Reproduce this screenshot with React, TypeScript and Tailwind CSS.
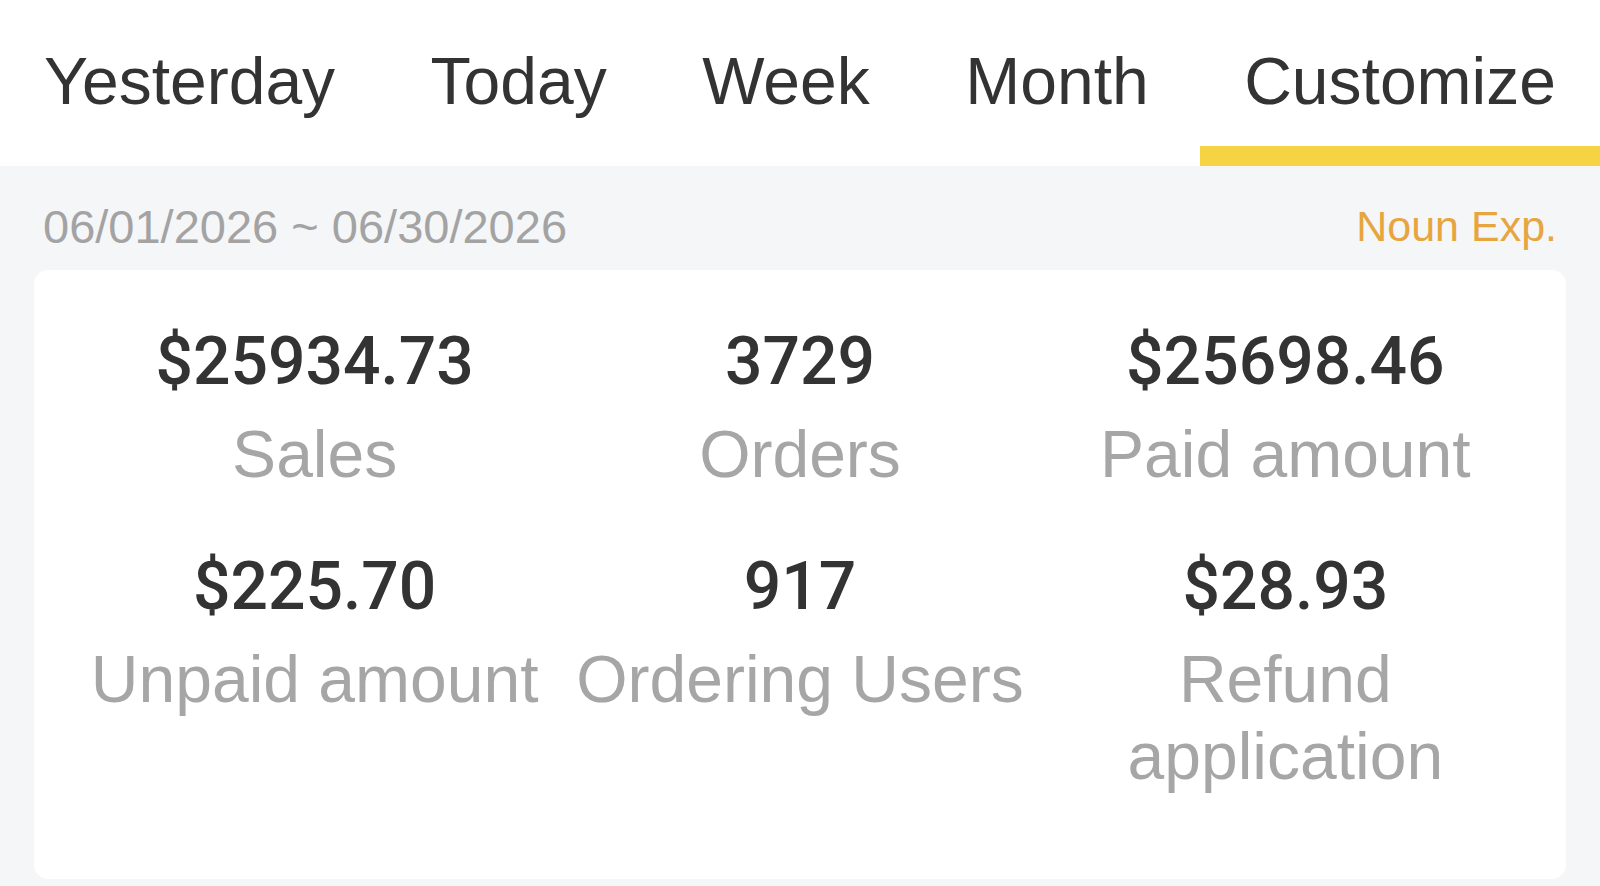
const tabs = ['Yesterday', 'Today', 'Week', 'Month', 'Customize']

const stats = [
  { value: '$25934.73', label: 'Sales' },
  { value: '3729', label: 'Orders' },
  { value: '$25698.46', label: 'Paid amount' },
  { value: '$225.70', label: 'Unpaid amount' },
  { value: '917', label: 'Ordering Users' },
  { value: '$28.93', label: 'Refund application' },
]

export default function App() {
  const active = 'Customize'

  return (
    <div className="min-h-[886px] bg-[#f5f6f8] font-['Liberation_Sans',Arial,sans-serif]">
      {/* Period tabs */}
      <div className="flex justify-between bg-white">
        {tabs.map((tab) => (
          <button key={tab} className="flex h-[166px] flex-col px-[44px] pt-[41px]">
            <span className="text-[66px] leading-[80px] text-[#333333]">{tab}</span>
            {tab === active && <span className="-mx-[44px] mt-auto h-[20px] bg-[#f5d342]" />}
          </button>
        ))}
      </div>

      {/* Date range */}
      <div className="flex items-center justify-between px-[43px] pt-[33px] pb-[16px]">
        <span className="text-[47px] leading-[55px] text-[#a3a3a3]">06/01/2026 ~ 06/30/2026</span>
        <span className="text-[43px] leading-[55px] text-[#e7a53f]">Noun Exp.</span>
      </div>

      {/* Stats card */}
      <div className="mx-[34px] rounded-[14px] bg-white px-[38px] pt-[52px] pb-[84px]">
        <div className="grid grid-cols-3 gap-y-[54px]">
          {stats.map((s) => (
            <div key={s.label} className="flex flex-col items-center gap-[14px] text-center">
              <span className="font-['Roboto',sans-serif] text-[66px] leading-[80px] font-medium text-[#333333]">
                {s.value}
              </span>
              <span className="text-[66px] leading-[77px] text-[#a6a6a6]">{s.label}</span>
            </div>
          ))}
        </div>
      </div>
    </div>
  )
}
